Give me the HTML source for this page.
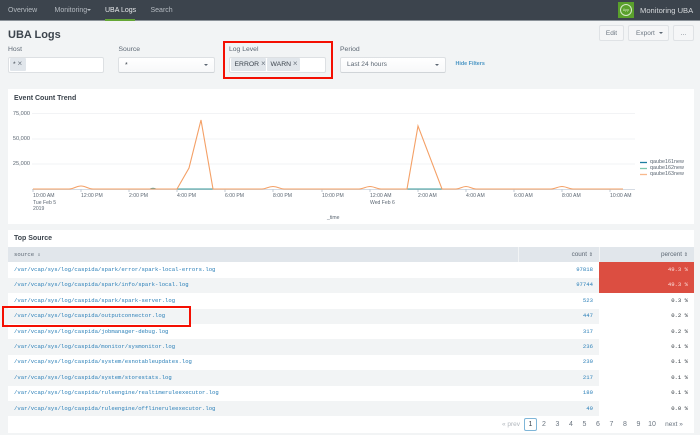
<!DOCTYPE html>
<html><head><meta charset="utf-8">
<style>
html,body{margin:0;padding:0}
body{width:700px;height:435px;overflow:hidden;background:#f2f4f5;position:relative;font-family:"Liberation Sans",sans-serif;font-size:7px;color:#5c6773}
.a{position:absolute;white-space:nowrap}
.nav{color:#b4bac0;top:6px;line-height:10px;font-size:7px}
.lab{top:45px;line-height:10px;font-size:6.8px;color:#5c6773}
.inp{top:57px;height:14px;background:#fff;border:1px solid #dde0e3;border-radius:2px;box-sizing:content-box}
.sel{background:linear-gradient(#fff,#f7f8f9);border-bottom:1px solid #d0d4d8}
.tag{top:58px;height:13px;line-height:14px;background:#e1e6eb;border-radius:1px;color:#3c444d;font-size:6.8px;box-sizing:border-box;padding-left:3.5px}
.tag span{color:#6f7882;font-size:8px;line-height:12px}
.caret{width:0;height:0;border-left:2px solid transparent;border-right:2px solid transparent;border-top:2px solid #5c6773}
.btn{top:25px;height:16px;box-sizing:border-box;border:1px solid #dfe2e5;border-radius:2px;background:#f5f6f7;text-align:center;line-height:16px;font-size:6.5px;color:#6b7580}
.panel{left:8px;width:686px;background:#fff}
.t{font-weight:bold;color:#3c444d;font-size:7px;line-height:10px}
.ax{font-size:5.1px;color:#5c6773;line-height:7px}
.ay{font-size:5.6px;color:#5c6773;line-height:7px}
.lg{font-size:5.4px;color:#5c6773;line-height:7px}
.m{font-family:"Liberation Mono",monospace;font-size:5.6px;line-height:8px}
.l{left:14px;color:#2a7fb8}
.c{color:#2a7fb8;text-align:right;width:50px;left:543px}
.p{color:#2f363d;text-align:right;width:50px;left:638px}
.pg{top:420px;font-size:7px;line-height:9px;color:#6b7580;width:14px;text-align:center}
.r{left:8px;width:591px;background:#f2f4f5}
.red{position:absolute;border:2px solid #f40f02;box-sizing:border-box}
</style></head>
<body>
<div class="a" style="left:0;top:0;width:700px;height:20px;background:#3c444d"></div>
<div class="a" style="left:0;top:20px;width:700px;height:1px;background:#8b9299"></div>
<div class="a" style="left:105px;top:19px;width:30px;height:2px;background:#65a637"></div>
<div class="a nav" style="left:8px">Overview</div>
<div class="a nav" style="left:54.5px">Monitoring</div>
<div class="a caret" style="left:87px;top:9px;border-top-color:#b4bac0"></div>
<div class="a nav" style="left:105px;color:#e8eaec">UBA Logs</div>
<div class="a nav" style="left:150.5px">Search</div>
<div class="a" style="left:618px;top:2px;width:16px;height:16px;background:#5aa02c"></div>
<div class="a" style="left:620px;top:4px;width:10px;height:10px;border:1px solid #d5e8c6;border-radius:50%;text-align:center;font-size:3.5px;line-height:10px;color:#d5e8c6">App</div>
<div class="a" style="left:640px;top:5px;font-size:7.6px;line-height:11px;color:#d5d8db">Monitoring UBA</div>

<div class="a" style="left:8px;top:28px;font-size:11px;line-height:15px;font-weight:bold;color:#3c444d">UBA Logs</div>
<div class="a btn" style="left:599px;width:25px">Edit</div>
<div class="a btn" style="left:628px;width:41px;text-align:left;padding-left:7px">Export</div>
<div class="a caret" style="left:659px;top:32px"></div>
<div class="a btn" style="left:673px;width:21px">...</div>

<div class="a lab" style="left:8px">Host</div>
<div class="a inp" style="left:8px;width:94px"></div>
<div class="a tag" style="left:9.5px;width:16px">* <span>×</span></div>
<div class="a lab" style="left:118.5px">Source</div>
<div class="a inp sel" style="left:118px;width:95px"></div>
<div class="a" style="left:125px;top:61px;font-size:7px;line-height:9px;color:#3c444d">*</div>
<div class="a caret" style="left:204px;top:64px"></div>
<div class="a lab" style="left:229px">Log Level</div>
<div class="a inp" style="left:229px;width:95px"></div>
<div class="a tag" style="left:231px;width:35px">ERROR <span>×</span></div>
<div class="a tag" style="left:267px;width:33px">WARN <span>×</span></div>
<div class="a red" style="left:223px;top:41px;width:110px;height:38px"></div>
<div class="a lab" style="left:340px">Period</div>
<div class="a inp sel" style="left:340px;width:104px"></div>
<div class="a" style="left:347px;top:60px;font-size:6.6px;line-height:10px;color:#5c6773">Last 24 hours</div>
<div class="a caret" style="left:435px;top:64px"></div>
<div class="a" style="left:455.5px;top:60px;font-size:5.4px;line-height:9px;font-weight:bold;color:#4a95c4">Hide Filters</div>

<div class="a panel" style="top:89px;height:135px"></div>
<div class="a t" style="left:14px;top:94px">Event Count Trend</div>
<svg class="a" style="left:0;top:85px" width="700" height="140" viewBox="0 85 700 140">
<g stroke="#f2f3f5" stroke-width="1" fill="none">
<path d="M32 113.5H635M32 139H635M32 164H635"/>
</g>
<path d="M32 189.5H635" stroke="#d5dbe3" fill="none"/>
<g stroke="#c3cbd4" fill="none"><path d="M33 189v3M81 189v3M129 189v3M177 189v3M225 189v3M273 189v3M322 189v3M370 189v3M418 189v3M466 189v3M514 189v3M562 189v3M610 189v3"/></g>
<path d="M150 189Q153 187.500 156 189M177 189H213M407 189H442" stroke="#3a9a9a" stroke-width="1" fill="none"/>
<path d="M33 189H69C74 189 76 186 81 186S88 189 93 189H177L189 168L201 120L213 189H262C266 189 268 186.500 273 186.500S280 189 284 189H359C363 189 366 186.500 370 186.500S377 189 381 189H407L418 126L442 189H456C460 189 462 186.500 466 186.500S472 189 476 189H551C555 189 558 186.500 562 186.500S569 189 573 189H623" stroke="#f4a066" stroke-width="1.100" fill="none"/>
<path d="M640 162.500H647" stroke="#1e7ea1" stroke-width="1.300"/>
<path d="M640 168.500H647" stroke="#7dc8ae" stroke-width="1.300"/>
<path d="M640 174.500H647" stroke="#f8b98c" stroke-width="1.300"/>
</svg>
<div class="a ay" style="right:670px;top:111px">75,000</div>
<div class="a ay" style="right:670px;top:136px">50,000</div>
<div class="a ay" style="right:670px;top:161px">25,000</div>
<div class="a ax" style="left:33px;top:193px">10:00 AM</div>
<div class="a ax" style="left:33px;top:200px">Tue Feb 5</div>
<div class="a ax" style="left:33px;top:206px">2019</div>
<div class="a ax" style="left:81px;top:193px">12:00 PM</div>
<div class="a ax" style="left:129px;top:193px">2:00 PM</div>
<div class="a ax" style="left:177px;top:193px">4:00 PM</div>
<div class="a ax" style="left:225px;top:193px">6:00 PM</div>
<div class="a ax" style="left:273px;top:193px">8:00 PM</div>
<div class="a ax" style="left:322px;top:193px">10:00 PM</div>
<div class="a ax" style="left:370px;top:193px">12:00 AM</div>
<div class="a ax" style="left:370px;top:200px">Wed Feb 6</div>
<div class="a ax" style="left:418px;top:193px">2:00 AM</div>
<div class="a ax" style="left:466px;top:193px">4:00 AM</div>
<div class="a ax" style="left:514px;top:193px">6:00 AM</div>
<div class="a ax" style="left:562px;top:193px">8:00 AM</div>
<div class="a ax" style="left:610px;top:193px">10:00 AM</div>
<div class="a ax" style="left:327px;top:215px">_time</div>
<div class="a lg" style="left:650px;top:159px">qaube161new</div>
<div class="a lg" style="left:650px;top:165px">qaube162new</div>
<div class="a lg" style="left:650px;top:171px">qaube163new</div>

<div class="a panel" style="top:229.500px;height:203.500px"></div>
<div class="a t" style="left:14px;top:234px">Top Source</div>
<div class="a" style="left:8px;top:247px;width:686px;height:15px;background:#e1e6eb"></div>
<div class="a" style="left:517.500px;top:247px;width:1px;height:15px;background:#f2f4f5"></div>
<div class="a" style="left:599px;top:247px;width:1px;height:15px;background:#f2f4f5"></div>
<div class="a m" style="left:14px;top:250.500px;color:#5c6773">source <span style="font-size:5px">⇕</span></div>
<div class="a" style="left:543px;width:50px;top:251px;text-align:right;font-size:6.3px;line-height:8px;color:#5c6773">count <span style="font-size:5px">⇕</span></div>
<div class="a" style="left:638px;width:50px;top:251px;text-align:right;font-size:6.3px;line-height:8px;color:#5c6773">percent <span style="font-size:5px">⇕</span></div>

<div class="a r" style="top:277.500px;height:15.500px"></div>
<div class="a r" style="top:308.500px;height:15.500px"></div>
<div class="a r" style="top:339px;height:15.500px"></div>
<div class="a r" style="top:370px;height:15.500px"></div>
<div class="a r" style="top:401px;height:15px"></div>
<div class="a" style="left:599px;top:262px;width:95px;height:31px;background:#dc4e41"></div>

<div class="a m l" style="top:266px">/var/vcap/sys/log/caspida/spark/error/spark-local-errors.log</div>
<div class="a m c" style="top:266px">97818</div>
<div class="a m p" style="top:266px;color:#fbe0dd">49.3 %</div>
<div class="a m l" style="top:281px">/var/vcap/sys/log/caspida/spark/info/spark-local.log</div>
<div class="a m c" style="top:281px">97744</div>
<div class="a m p" style="top:281px;color:#fbe0dd">49.3 %</div>
<div class="a m l" style="top:297px">/var/vcap/sys/log/caspida/spark/spark-server.log</div>
<div class="a m c" style="top:297px">523</div>
<div class="a m p" style="top:297px">0.3 %</div>
<div class="a m l" style="top:312px">/var/vcap/sys/log/caspida/outputconnector.log</div>
<div class="a m c" style="top:312px">447</div>
<div class="a m p" style="top:312px">0.2 %</div>
<div class="a m l" style="top:328px">/var/vcap/sys/log/caspida/jobmanager-debug.log</div>
<div class="a m c" style="top:328px">317</div>
<div class="a m p" style="top:328px">0.2 %</div>
<div class="a m l" style="top:343px">/var/vcap/sys/log/caspida/monitor/sysmonitor.log</div>
<div class="a m c" style="top:343px">236</div>
<div class="a m p" style="top:343px">0.1 %</div>
<div class="a m l" style="top:358px">/var/vcap/sys/log/caspida/system/esnotableupdates.log</div>
<div class="a m c" style="top:358px">230</div>
<div class="a m p" style="top:358px">0.1 %</div>
<div class="a m l" style="top:374px">/var/vcap/sys/log/caspida/system/storestats.log</div>
<div class="a m c" style="top:374px">217</div>
<div class="a m p" style="top:374px">0.1 %</div>
<div class="a m l" style="top:389px">/var/vcap/sys/log/caspida/ruleengine/realtimeruleexecutor.log</div>
<div class="a m c" style="top:389px">180</div>
<div class="a m p" style="top:389px">0.1 %</div>
<div class="a m l" style="top:405px">/var/vcap/sys/log/caspida/ruleengine/offlineruleexecutor.log</div>
<div class="a m c" style="top:405px">49</div>
<div class="a m p" style="top:405px">0.0 %</div>

<div class="a red" style="left:1.500px;top:305.500px;width:189px;height:21.500px"></div>

<div class="a pg" style="left:500px;width:22px;color:#b0b6bc;font-size:6.5px">« prev</div>
<div class="a" style="left:524px;top:417.500px;width:13px;height:13px;box-sizing:border-box;border:1px solid #7fb6d8;border-radius:2px;text-align:center;line-height:12px;font-size:7px;color:#3c444d">1</div>
<div class="a pg" style="left:537px">2</div>
<div class="a pg" style="left:550.500px">3</div>
<div class="a pg" style="left:564px">4</div>
<div class="a pg" style="left:577.500px">5</div>
<div class="a pg" style="left:591px">6</div>
<div class="a pg" style="left:604.500px">7</div>
<div class="a pg" style="left:618px">8</div>
<div class="a pg" style="left:631.500px">9</div>
<div class="a pg" style="left:645px">10</div>
<div class="a pg" style="left:664px;width:20px;font-size:6.5px">next »</div>
</body></html>
